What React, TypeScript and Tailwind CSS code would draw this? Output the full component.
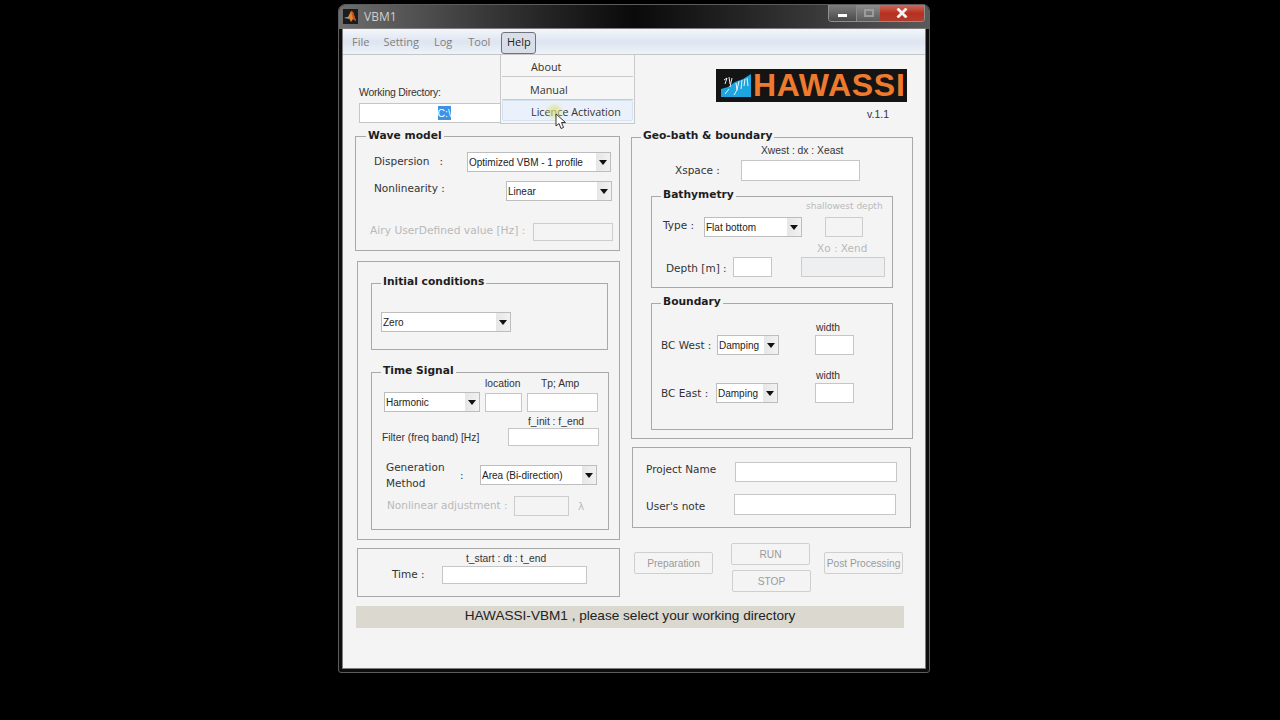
import type { ReactNode } from "react";

const Group = ({ title, className, legend = "ml-[9px]", children }: { title: string; className: string; legend?: string; children: ReactNode }) => (
  <fieldset className={`min-w-0 border border-[#a9a9a9] ${className}`}>
    <legend className={`${legend} px-[2px] h-[14px] leading-[11px] text-[10.7px] font-bold text-[#1e1e1e] font-['DejaVu_Sans',sans-serif]`}>
      {title}
    </legend>
    {children}
  </fieldset>
);

const Field = ({ className }: { className: string }) => (
  <div className={`shrink-0 border border-[#c6c6c6] bg-white ${className}`} />
);

const Disabled = ({ className }: { className: string }) => (
  <div className={`shrink-0 border border-[#cdcdcd] ${className}`} />
);

const Select = ({ value, className }: { value: string; className: string }) => (
  <div className={`shrink-0 h-[20px] flex items-center border border-[#bdbdbd] bg-white pl-[1px] text-[10px] text-[#222] ${className}`}>
    <span className="flex-1 pt-[1px] whitespace-nowrap overflow-hidden">{value}</span>
    <span className="w-[14px] h-[18px] pr-[1px] flex items-center justify-center bg-gradient-to-r from-[#e6e6e6] to-[#f2f2f2]">
      <svg width="8" height="5" viewBox="0 0 8 5">
        <path d="M0 0h8L4 5z" fill="#111" />
      </svg>
    </span>
  </div>
);

const Label = ({ children, className }: { children: ReactNode; className: string }) => (
  <div className={`shrink-0 text-[10.5px] leading-[14px] whitespace-nowrap text-[#333] font-['DejaVu_Sans',sans-serif] ${className}`}>
    {children}
  </div>
);

const Muted = ({ children, className }: { children: ReactNode; className: string }) => (
  <div className={`shrink-0 leading-[14px] whitespace-nowrap text-[#b9b9b9] font-['DejaVu_Sans',sans-serif] ${className}`}>
    {children}
  </div>
);

const Small = ({ children, className }: { children: ReactNode; className: string }) => (
  <div className={`h-[12px] leading-[14px] text-[10.3px] whitespace-nowrap text-[#333] ${className}`}>{children}</div>
);

const ActionButton = ({ label, className }: { label: string; className: string }) => (
  <div className={`h-[22px] w-[79px] pt-[2px] flex items-center justify-center rounded-[2px] border border-[#cfcfcf] text-[10.2px] text-[#9a9a9a] whitespace-nowrap ${className}`}>
    {label}
  </div>
);

export default function App() {
  return (
    <div className="w-[1280px] h-[720px] overflow-hidden bg-black pt-[4px] pl-[338px] font-['Liberation_Sans',Arial,sans-serif]">
      <div className="w-[592px] h-[669px] rounded-t-[7px] rounded-b-[3px] border border-[#5c5c5c] bg-[#0d0d0d] px-[4px]">
        {/* Title bar */}
        <div className="-mx-[4px] h-[24px] px-[4px] flex justify-between rounded-t-[6px] bg-gradient-to-r from-[#6e6e6e] via-[#0a0a0a] to-[#5a5a5a]">
          <div className="flex items-center gap-[6px] pb-[1px]">
            <svg width="15" height="15" viewBox="0 0 15 15">
              <rect width="15" height="15" fill="#1c1c1c" />
              <path d="M1 9l4-1 3-6 2 1 3 9-3-2-2 3-2-4z" fill="#e8842c" />
              <path d="M8 2l2 1 3 9-3-2z" fill="#c9501f" />
              <path d="M1 9l4-1 2 2z" fill="#5fb3d9" />
            </svg>
            <span className="text-[12px] text-[#cfcfcf] font-['Open_Sans',sans-serif]">VBM1</span>
          </div>
          <div className="w-[97px] h-[17px] flex rounded-b-[4px] border border-t-0 border-[#8f8f8f] overflow-hidden">
            <div className="w-[27px] flex items-center justify-center bg-gradient-to-b from-[#7f7f7f] to-[#4a4a4a]">
              <div className="w-[9px] h-[3px] mt-[5px] bg-white" />
            </div>
            <div className="w-[24px] flex items-center justify-center bg-gradient-to-b from-[#8d8d8d] to-[#5c5c5c] border-l border-[#8a8a8a]">
              <div className="w-[10px] h-[8px] border-2 border-[#9c9c9c]" />
            </div>
            <div className="flex-1 flex items-center justify-center bg-gradient-to-b from-[#c9695c] via-[#b8301f] to-[#b43a2a]">
              <svg width="12" height="10" viewBox="0 0 12 10">
                <path d="M1.5 0.5l9 9M10.5 0.5l-9 9" stroke="#f4f4f4" strokeWidth="2.8" />
              </svg>
            </div>
          </div>
        </div>

        {/* Client area */}
        <div className="relative w-[582px] h-[639px] bg-[#f4f4f5] outline outline-1 outline-[#7d7d7d]">
          {/* Menu bar */}
          <div className="h-[26px] flex items-center border-b border-[#c4c6ca] bg-gradient-to-b from-[#f3f6fb] via-[#dee5f1] to-[#eef2f8] text-[11px] text-[#808080] font-['Open_Sans',sans-serif]">
            <span className="ml-[9px] pt-[1px]">File</span>
            <span className="ml-[14px] pt-[1px]">Setting</span>
            <span className="ml-[15px] pt-[1px]">Log</span>
            <span className="ml-[16px] pt-[1px]">Tool</span>
            <span className="ml-[11px] w-[35px] h-[22px] mt-[2px] flex items-center justify-center rounded-[3px] border border-[#70747a] bg-[#d9dfe9] text-[#222]">
              Help
            </span>
          </div>

          {/* Header row */}
          <div className="h-[74px] flex">
            <div className="w-[373px] pl-[16px] pt-[31px]">
              <div className="h-[12px] leading-[12px] text-[10.5px] text-[#333] tracking-[-0.25px]">Working Directory:</div>
              <div className="mt-[5px] w-[142px] h-[20px] flex items-center justify-center pl-[28px] border border-[#c6c6c6] bg-white">
                <span className="w-[13px] h-[14px] leading-[14px] bg-[#3a93e6] text-[10.5px] text-white">C:\</span>
              </div>
            </div>
            <div className="w-[191px] pt-[14px]">
              <div className="h-[33px] flex items-center bg-[#141414]">
                <svg width="30" height="24" viewBox="0 0 30 24" className="ml-[5px]">
                  <path d="M0 23V15l7-2 7-5 8-3 8-5v23z" fill="#1ea5df" />
                  <path d="M3 6l3-2-2 6M8 3l1 7M11 4l-2 9M15 9l1 7 2-9M21 6l-1 9M24 5l-1 7M26 4l1 8M4 20l4-5M13 21l3-5" stroke="#fff" strokeWidth="0.9" fill="none" />
                </svg>
                <span className="ml-[2px] text-[32px] leading-[33px] tracking-[0.7px] font-bold text-[#ee7a2e]">HAWASSI</span>
              </div>
              <div className="mt-[6px] pr-[18px] h-[12px] leading-[12px] text-right text-[10.5px] text-[#333]">v.1.1</div>
            </div>
          </div>

          {/* Two columns */}
          <div className="flex pl-[12px]">
            <div className="w-[265px]">
              <Group title="Wave model" legend="ml-[10px] pt-[1px]" className="w-[265px] h-[122px]">
                <div className="mt-[9px] ml-[18px] flex items-center">
                  <Label className="w-[93px] -mt-[2px]">Dispersion&nbsp;&nbsp;&nbsp;:</Label>
                  <Select value="Optimized VBM - 1 profile" className="w-[144px]" />
                </div>
                <div className="mt-[9px] ml-[18px] flex items-center">
                  <Label className="w-[132px] -mt-[6px]">Nonlinearity :</Label>
                  <Select value="Linear" className="w-[106px]" />
                </div>
                <div className="mt-[22px] ml-[14px] flex items-center">
                  <Muted className="w-[163px] text-[10.7px] -mt-[3px]">Airy UserDefined value [Hz] :</Muted>
                  <Disabled className="w-[80px] h-[18px]" />
                </div>
              </Group>

              <div className="mt-[10px] ml-[2px] w-[263px] h-[279px] border border-[#a9a9a9]">
                <Group title="Initial conditions" className="mt-[14px] ml-[13px] w-[237px] h-[74px]">
                  <Select value="Zero" className="mt-[22px] ml-[9px] w-[130px]" />
                </Group>
                <Group title="Time Signal" className="mt-[15px] ml-[13px] w-[238px] h-[165px]">
                  <div className="-mt-[2px] h-[12px] flex">
                    <Small className="ml-[113px] w-[56px]">location</Small>
                    <Small className="">Tp; Amp</Small>
                  </div>
                  <div className="mt-[3px] ml-[12px] flex items-center">
                    <Select value="Harmonic" className="w-[96px]" />
                    <Field className="ml-[5px] w-[37px] h-[19px]" />
                    <Field className="ml-[5px] w-[71px] h-[19px]" />
                  </div>
                  <Small className="mt-[3px] ml-[156px]">f_init : f_end</Small>
                  <div className="mt-[1px] ml-[10px] flex items-center">
                    <Small className="w-[126px]">Filter (freq band) [Hz]</Small>
                    <Field className="w-[91px] h-[18px]" />
                  </div>
                  <div className="mt-[13px] ml-[14px] h-[32px] flex items-center">
                    <Label className="w-[74px] leading-[16px] -mt-[1px]">
                      Generation
                      <br />
                      Method
                    </Label>
                    <Label className="w-[20px]">:</Label>
                    <Select value="Area (Bi-direction)" className="w-[117px]" />
                  </div>
                  <div className="mt-[5px] ml-[15px] flex items-center">
                    <Muted className="w-[127px] text-[10.5px] -mt-[2px]">Nonlinear adjustment :</Muted>
                    <Disabled className="w-[55px] h-[20px]" />
                    <Muted className="ml-[9px] text-[10.5px]">λ</Muted>
                  </div>
                </Group>
              </div>

              <div className="mt-[8px] ml-[2px] w-[263px] h-[49px] border border-[#a9a9a9]">
                <Small className="mt-[3px] ml-[108px]">t_start : dt : t_end</Small>
                <div className="mt-[2px] ml-[34px] flex items-center">
                  <Label className="w-[50px] -mt-[2px]">Time :</Label>
                  <Field className="w-[145px] h-[18px]" />
                </div>
              </div>
            </div>

            <div className="ml-[11px] mt-[1px] w-[282px]">
              <Group title="Geo-bath & boundary" className="w-[282px] h-[309px]">
                <Small className="ml-[129px]">Xwest : dx : Xeast</Small>
                <div className="mt-[4px] ml-[43px] flex items-center">
                  <Label className="w-[66px] -mt-[2px]">Xspace :</Label>
                  <Field className="w-[119px] h-[21px]" />
                </div>

                <Group title="Bathymetry" className="mt-[8px] ml-[19px] w-[242px] h-[99px]">
                  <Muted className="-mt-[4px] ml-[154px] h-[12px] leading-[12px] text-[9px]">shallowest depth</Muted>
                  <div className="mt-[5px] ml-[11px] flex items-center">
                    <Label className="w-[41px] -mt-[3px]">Type :</Label>
                    <Select value="Flat bottom" className="w-[98px] mt-[1px]" />
                    <Disabled className="ml-[23px] w-[38px] h-[20px]" />
                  </div>
                  <Muted className="mt-[4px] ml-[165px] h-[12px] leading-[12px] text-[10.5px]">Xo : Xend</Muted>
                  <div className="mt-[4px] ml-[14px] flex items-center">
                    <Label className="w-[67px] mt-[1px]">Depth [m] :</Label>
                    <Field className="w-[39px] h-[20px]" />
                    <Disabled className="ml-[29px] w-[84px] h-[20px] bg-[#eeeff0]" />
                  </div>
                </Group>

                <Group title="Boundary" className="mt-[8px] ml-[19px] w-[242px] h-[134px]">
                  <Small className="mt-[11px] ml-[164px]">width</Small>
                  <div className="mt-[2px] ml-[9px] flex items-center">
                    <Label className="w-[56px]">BC West :</Label>
                    <Select value="Damping" className="w-[62px]" />
                    <Field className="ml-[36px] w-[39px] h-[20px]" />
                  </div>
                  <Small className="mt-[14px] ml-[164px]">width</Small>
                  <div className="mt-[2px] ml-[9px] flex items-center">
                    <Label className="w-[55px]">BC East :</Label>
                    <Select value="Damping" className="w-[62px]" />
                    <Field className="ml-[37px] w-[39px] h-[20px]" />
                  </div>
                </Group>
              </Group>

              <div className="mt-[8px] ml-[1px] w-[279px] h-[81px] border border-[#a9a9a9]">
                <div className="mt-[14px] ml-[13px] flex items-center">
                  <Label className="w-[89px] -mt-[6px]">Project Name</Label>
                  <Field className="w-[162px] h-[20px]" />
                </div>
                <div className="mt-[12px] ml-[13px] flex items-center">
                  <Label className="w-[88px] mt-[2px]">User's note</Label>
                  <Field className="w-[162px] h-[21px]" />
                </div>
              </div>

              <div className="mt-[15px] ml-[3px] flex items-start">
                <ActionButton label="Preparation" className="mt-[9px]" />
                <div className="ml-[18px] w-[80px]">
                  <ActionButton label="RUN" className="" />
                  <ActionButton label="STOP" className="mt-[5px] ml-[1px]" />
                </div>
                <ActionButton label="Post Processing" className="ml-[13px] mt-[9px]" />
              </div>
            </div>
          </div>

          {/* Status line */}
          <div className="mt-[9px] ml-[13px] w-[548px] h-[22px] pb-[1px] flex items-center justify-center bg-[#dad8cf] text-[13.6px] text-[#222]">
            HAWASSI-VBM1 , please select your working directory
          </div>

          {/* Open Help menu */}
          <div className="absolute left-[157px] top-[25px] w-[135px] h-[70px] border border-[#c9c9c9] bg-[#f6f6f6] px-[1px] text-[10.8px] text-[#333] font-['Open_Sans',sans-serif]">
            <div className="h-[22px] leading-[24px] pl-[29px] border-b border-[#c9c9c9]">About</div>
            <div className="h-[23px] leading-[26px] pl-[28px] border-b border-[#c9c9c9]">Manual</div>
            <div className="h-[21px] leading-[21px] pl-[28px] rounded-[2px] border border-[#d6e3f2] bg-[#eaf1fa]">Licence Activation</div>
          </div>

          {/* Mouse pointer */}
          <div className="absolute left-[205px] top-[76px] w-[13px] h-[13px] rounded-full bg-[#dfe07a] opacity-70 blur-[2px]" />
          <svg className="absolute left-[212px] top-[84px]" width="13" height="17" viewBox="0 0 13 17">
            <path d="M1 1v12l3-2.5 2 5 2.5-1-2-5h4z" fill="#fff" stroke="#333" strokeWidth="1" />
          </svg>
        </div>
      </div>
    </div>
  );
}
